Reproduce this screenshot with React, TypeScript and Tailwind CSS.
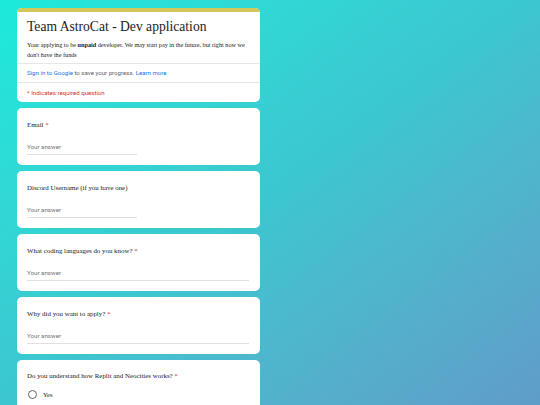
import React from 'react';

const serif = { fontFamily: '"Liberation Serif", "Times New Roman", serif' };
const sans = { fontFamily: 'Roboto, "Liberation Sans", sans-serif' };

const Req = () => <span className="text-[#d93025]"> *</span>;

const TextQuestion: React.FC<{ label: string; required?: boolean; full?: boolean }> = ({ label, required, full }) => (
  <div className="bg-white rounded-[5px] h-[57px] px-[10px] pt-[12px]">
    <div className="text-[6.9px] leading-[10px] text-[#202124]" style={serif}>
      {label}
      {required && <Req />}
    </div>
    <div
      className={`mt-[13px] text-[6.2px] leading-[9px] text-[#70757a] pb-[2px] border-b border-[#e0e0e0] ${full ? 'w-[222px]' : 'w-[110px]'}`}
      style={sans}
    >
      Your answer
    </div>
  </div>
);

export default function App() {
  return (
    <div className="w-[540px] h-[405px] overflow-hidden bg-gradient-to-br from-[#1aeadb] via-[#3cc6d0] to-[#5f9cc8]">
      <div className="ml-[17px] w-[243px] pt-[8px] flex flex-col gap-[6px]">
        <div className="bg-white rounded-[5px] overflow-hidden">
          <div className="h-[4px] bg-[#d5c65c]" />
          <div className="px-[10px] pt-[5px] pb-[3px] border-b border-[#e6e6e6]">
            <div className="text-[13.6px] leading-[19px] text-[#202124]" style={serif}>
              Team AstroCat - Dev application
            </div>
            <div className="mt-[4px] text-[6.2px] leading-[10px] text-[#202124] whitespace-nowrap" style={serif}>
              Your applying to be <b>unpaid</b> developer. We may start pay in the future, but right now we
              <br />
              don't have the funds
            </div>
          </div>
          <div
            className="px-[10px] h-[19px] flex items-center text-[6.1px] text-[#5f6368] border-b border-[#e6e6e6]"
            style={sans}
          >
            <span className="text-[#1a73e8]">Sign in to Google</span>&nbsp;to save your progress.&nbsp;
            <span className="text-[#1a73e8]">Learn more</span>
          </div>
          <div className="px-[10px] h-[19px] flex items-center text-[6.1px] text-[#d93025]" style={sans}>
            * Indicates required question
          </div>
        </div>

        <TextQuestion label="Email" required />
        <TextQuestion label="Discord Username (if you have one)" />
        <TextQuestion label="What coding languages do you know?" required full />
        <TextQuestion label="Why did you want to apply?" required full />

        <div className="bg-white rounded-[5px] h-[80px] px-[10px] pt-[11px]">
          <div className="text-[6.9px] leading-[10px] text-[#202124]" style={serif}>
            Do you understand how Replit and Neocities works?
            <Req />
          </div>
          <div className="mt-[9px] flex items-center gap-[6px] pl-[1px]">
            <div className="w-[9px] h-[9px] rounded-full border-[1.3px] border-[#5f6368]" />
            <span className="text-[6.5px] text-[#202124]" style={serif}>Yes</span>
          </div>
        </div>
      </div>
    </div>
  );
}
